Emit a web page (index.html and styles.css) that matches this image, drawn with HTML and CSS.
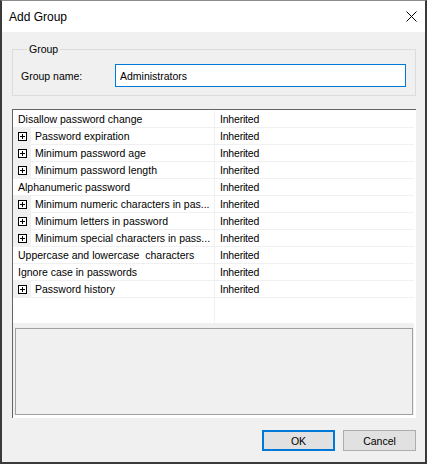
FILE: index.html
```html
<!DOCTYPE html>
<html>
<head>
<meta charset="utf-8">
<title>Add Group</title>
<link rel="stylesheet" href="styles.css">
</head>
<body>
<div class="window">
  <div class="titlebar">
    <span class="title">Add Group</span>
    <svg class="close" width="11" height="11" viewBox="0 0 11 11"><path d="M0.5 0.5 L10.5 10.5 M10.5 0.5 L0.5 10.5" stroke="#000" stroke-width="1" fill="none"/></svg>
  </div>
  <div class="content">
    <fieldset class="group">
      <legend>Group</legend>
      <div class="field-row">
        <span class="field-label">Group name:</span>
        <div class="input">Administrators</div>
      </div>
    </fieldset>
    <div class="grid">
      <div class="grid-view">
        <div class="row"><div class="cell-name"><span class="name">Disallow password change</span></div><div class="cell-value">Inherited</div></div>
        <div class="row"><div class="cell-name expandable"><span class="margin"><svg class="plus" width="9" height="9" viewBox="0 0 9 9"><rect x="0.5" y="0.5" width="8" height="8" fill="#fff" stroke="#000"/><path d="M2 4.5 H7 M4.5 2 V7" stroke="#000"/></svg></span><span class="name">Password expiration</span></div><div class="cell-value">Inherited</div></div>
        <div class="row"><div class="cell-name expandable"><span class="margin"><svg class="plus" width="9" height="9" viewBox="0 0 9 9"><rect x="0.5" y="0.5" width="8" height="8" fill="#fff" stroke="#000"/><path d="M2 4.5 H7 M4.5 2 V7" stroke="#000"/></svg></span><span class="name">Minimum password age</span></div><div class="cell-value">Inherited</div></div>
        <div class="row"><div class="cell-name expandable"><span class="margin"><svg class="plus" width="9" height="9" viewBox="0 0 9 9"><rect x="0.5" y="0.5" width="8" height="8" fill="#fff" stroke="#000"/><path d="M2 4.5 H7 M4.5 2 V7" stroke="#000"/></svg></span><span class="name">Minimum password length</span></div><div class="cell-value">Inherited</div></div>
        <div class="row"><div class="cell-name"><span class="name">Alphanumeric password</span></div><div class="cell-value">Inherited</div></div>
        <div class="row"><div class="cell-name expandable"><span class="margin"><svg class="plus" width="9" height="9" viewBox="0 0 9 9"><rect x="0.5" y="0.5" width="8" height="8" fill="#fff" stroke="#000"/><path d="M2 4.5 H7 M4.5 2 V7" stroke="#000"/></svg></span><span class="name">Minimum numeric characters in pas...</span></div><div class="cell-value">Inherited</div></div>
        <div class="row"><div class="cell-name expandable"><span class="margin"><svg class="plus" width="9" height="9" viewBox="0 0 9 9"><rect x="0.5" y="0.5" width="8" height="8" fill="#fff" stroke="#000"/><path d="M2 4.5 H7 M4.5 2 V7" stroke="#000"/></svg></span><span class="name">Minimum letters in password</span></div><div class="cell-value">Inherited</div></div>
        <div class="row"><div class="cell-name expandable"><span class="margin"><svg class="plus" width="9" height="9" viewBox="0 0 9 9"><rect x="0.5" y="0.5" width="8" height="8" fill="#fff" stroke="#000"/><path d="M2 4.5 H7 M4.5 2 V7" stroke="#000"/></svg></span><span class="name">Minimum special characters in pass...</span></div><div class="cell-value">Inherited</div></div>
        <div class="row"><div class="cell-name"><span class="name">Uppercase and lowercase  characters</span></div><div class="cell-value">Inherited</div></div>
        <div class="row"><div class="cell-name"><span class="name">Ignore case in passwords</span></div><div class="cell-value">Inherited</div></div>
        <div class="row"><div class="cell-name expandable"><span class="margin"><svg class="plus" width="9" height="9" viewBox="0 0 9 9"><rect x="0.5" y="0.5" width="8" height="8" fill="#fff" stroke="#000"/><path d="M2 4.5 H7 M4.5 2 V7" stroke="#000"/></svg></span><span class="name">Password history</span></div><div class="cell-value">Inherited</div></div>
        <div class="grid-empty"><div class="empty-name"></div><div class="empty-value"></div></div>
      </div>
      <div class="help-area"><div class="help-box"></div></div>
    </div>
    <div class="buttons">
      <button class="btn btn-default">OK</button>
      <button class="btn">Cancel</button>
    </div>
  </div>
</div>
</body>
</html>
```
FILE: styles.css
```css
* { box-sizing: border-box; }
html, body { margin: 0; padding: 0; }
body {
  width: 427px;
  height: 464px;
  background: #f0f0f0;
  font-family: "Liberation Sans", Arial, sans-serif;
  font-size: 10.5px;
  color: #000;
}
.window {
  width: 427px;
  height: 464px;
  border: 2px solid #3a3a3a;
  border-top: 1px solid #8c8c8c;
  display: flex;
  flex-direction: column;
  background: #f0f0f0;
}
.titlebar {
  height: 31px;
  flex: none;
  background: #fff;
  display: flex;
  align-items: center;
  justify-content: space-between;
  padding: 0 8px 0 7px;
}
.title {
  font-size: 12px;
  line-height: 14px;
}
.close { display: block; margin-top: -1px; }
.content {
  flex: 1;
  display: flex;
  flex-direction: column;
  padding: 11px 9px 11px 10px;
}
.group {
  margin: 0;
  padding: 8px 9px 8px 8px;
  border: 1px solid #dcdcdc;
  min-width: 0;
}
.group legend {
  margin-left: 6px;
  padding: 0 2px;
  line-height: 13px;
  font-size: 10.5px;
}
.field-row {
  display: flex;
  align-items: center;
  height: 23px;
}
.field-label {
  width: 94px;
  flex: none;
}
.input {
  flex: 1;
  height: 23px;
  border: 1px solid #0078d7;
  background: #fff;
  padding: 0 5px 0 4px;
  display: flex;
  align-items: center;
}
.grid {
  margin-top: 13px;
  border-top: 1px solid #646464;
  border-left: 1px solid #646464;
  background: #fff;
  padding: 0 2px 3px 0;
  display: flex;
  flex-direction: column;
}
.grid-view {
  height: 213px;
  padding-top: 1px;
  display: flex;
  flex-direction: column;
}
.row {
  display: flex;
  height: 17px;
  border-bottom: 1px solid #f0f0f0;
  flex: none;
}
.cell-name {
  width: 202px;
  flex: none;
  border-right: 1px solid #f0f0f0;
  display: flex;
  align-items: center;
  padding-left: 5px;
  white-space: pre;
  overflow: hidden;
}
.cell-name.expandable { padding-left: 0; }
.margin {
  width: 18px;
  height: 16px;
  background: #f0f0f0;
  flex: none;
  display: flex;
  align-items: center;
  justify-content: center;
  margin-right: 4px;
}
.plus { display: block; }
.name { line-height: 16px; }
.cell-value {
  flex: 1;
  padding-left: 5px;
  line-height: 16px;
  letter-spacing: -0.2px;
}
.grid-empty {
  flex: 1;
  display: flex;
}
.empty-name {
  width: 202px;
  border-right: 1px solid #f0f0f0;
}
.empty-value { flex: 1; }
.help-area {
  height: 92px;
  background: #f0f0f0;
  padding: 5px 1px 0 2px;
  display: flex;
}
.help-box {
  flex: 1;
  border: 1px solid #a0a0a0;
}
.buttons {
  margin-top: 12px;
  display: flex;
  justify-content: flex-end;
  gap: 8px;
}
.btn {
  width: 73px;
  height: 21px;
  margin: 0;
  padding: 0;
  background: #e1e1e1;
  border: 1px solid #adadad;
  font-family: "Liberation Sans", Arial, sans-serif;
  font-size: 10.5px;
  color: #000;
}
.btn-default {
  border: 2px solid #0078d7;
}
```
